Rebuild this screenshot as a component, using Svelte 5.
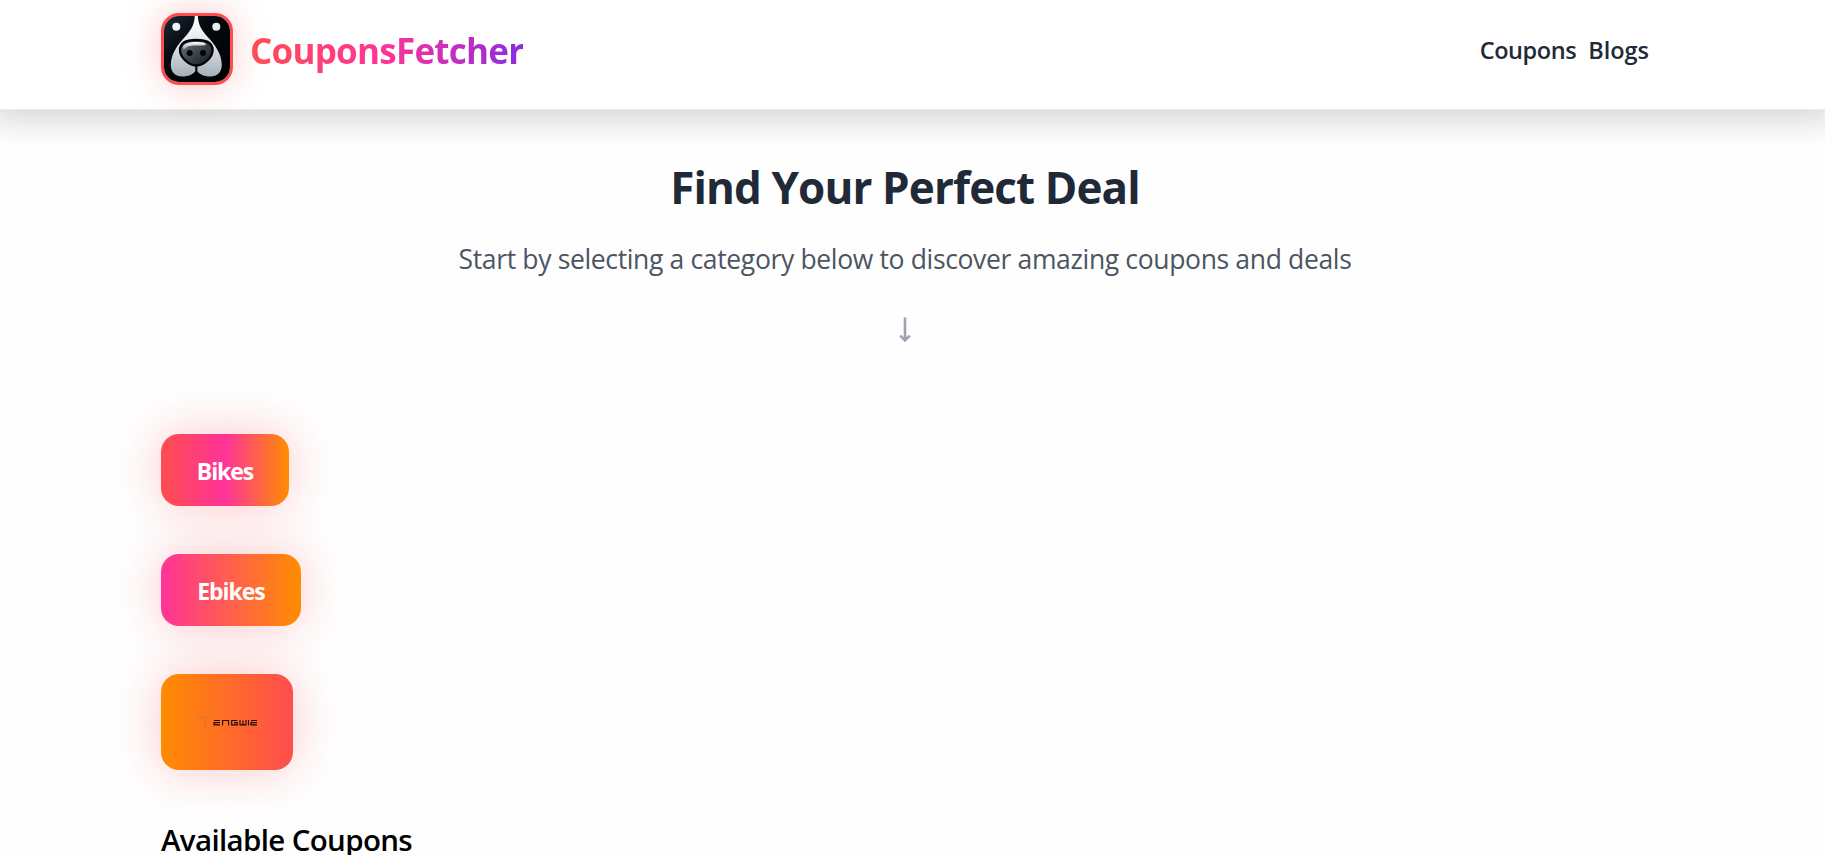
<script>
  const categories = [
    { name: 'Bikes', kind: 'bikes' },
    { name: 'Ebikes', kind: 'ebikes' },
    { name: 'Engwe', kind: 'engwe' }
  ];
</script>

<header>
  <div class="inner">
    <a class="brand" href="#home">
      <span class="logo">
        <svg viewBox="0.6 0 66 66" width="66" height="66" aria-hidden="true">
          <defs>
            <linearGradient id="night" x1="0" y1="0" x2="1" y2="1">
              <stop offset="0" stop-color="#1b2b38" />
              <stop offset=".35" stop-color="#050a10" />
              <stop offset="1" stop-color="#000" />
            </linearGradient>
            <linearGradient id="fur" x1="0" y1="0" x2="0" y2="1">
              <stop offset="0" stop-color="#fff" />
              <stop offset=".45" stop-color="#e3e6e9" />
              <stop offset="1" stop-color="#a3b0b8" />
            </linearGradient>
            <linearGradient id="nose" x1="0" y1="0" x2="1" y2="1">
              <stop offset="0" stop-color="#717b84" />
              <stop offset=".5" stop-color="#3c444c" />
              <stop offset="1" stop-color="#14181d" />
            </linearGradient>
            <linearGradient id="shine" x1="0" y1="0" x2="0" y2="1">
              <stop offset="0" stop-color="#fff" />
              <stop offset="1" stop-color="#8d969e" />
            </linearGradient>
          </defs>
          <rect width="68" height="66" fill="url(#night)" />
          <path d="M31.400 0h3c.4 8 3 13 9 20 9 9 15 19 15 29 0 7-4.500 11.500-11.500 11.500-6 0-11-2-14-6.500-3 4.500-8 6.500-14 6.500-7 0-11.500-4.500-11.500-11.500 0-10 6-20 15-29 6-7 8.600-12 9-20z" fill="url(#fur)" />
          <path d="M32.900 49v7" stroke="#000" stroke-width="2" />
          <path d="M32.900 24c9.800 0 16.300 3.300 16.300 10.300 0 7-8.700 15.200-16.300 15.200s-16.300-8.200-16.300-15.200c0-7 6.500-10.300 16.300-10.300z" fill="url(#nose)" stroke="#000308" stroke-width="2.300" />
          <path d="M19.500 31c1-3.500 6-5 13.400-5 6 0 9.500.8 9.500 2.300 0 1.400-4 1.200-10 1.200-6 0-9 1-11 3.500-.8 1-2.200.2-1.900-2z" fill="url(#shine)" />
          <circle cx="26.300" cy="37" r="3" fill="#020408" />
          <circle cx="39.600" cy="37" r="3" fill="#020408" />
          <circle cx="12.900" cy="10.800" r="4" fill="#f1f3f4" />
          <circle cx="52.900" cy="10.800" r="4" fill="#e9ecee" />
        </svg>
      </span>
      <span class="wordmark">CouponsFetcher</span>
    </a>
    <nav>
      <a class="coupons" href="#coupons">Coupons</a>
      <a class="blogs" href="#blogs">Blogs</a>
    </nav>
  </div>
</header>

<main>
  <section class="intro">
    <h1>Find Your Perfect Deal</h1>
    <p>Start by selecting a category below to discover amazing coupons and deals</p>
    <svg class="arrow" viewBox="0 0 13 26" width="13" height="26" aria-hidden="true">
      <path d="M6 0.500v22.500M1.200 18.700L6 23.500l4.800-4.800" />
    </svg>
  </section>

  <div class="categories">
    {#each categories as { name, kind }}
      <button class={kind}>
        {#if kind === 'engwe'}
          <svg viewBox="0 0 60 24" width="60" height="24" aria-hidden="true">
            <path d="M0 4l6 1.200 2 1.300 2-1.300 6-1.200-3 3-3.300 1-1 8-.7 1-.7-1-1-8-3.300-1z" fill="#d9752b" opacity=".6" />
            <g fill="none" stroke="#1c0b08" stroke-width="1.100">
              <path d="M23 9.500h-6M23 11.600h-6v2.300h6" />
              <path d="M25.600 14.400v-4.900h6v4.900" />
              <path d="M40.300 9.500h-5.600v4.400h5.600v-2.300h-3.300" />
              <path d="M43 9v4.900h6V9M46 9.500v4.400M51.500 9v5.400" />
              <path d="M60 9.500h-6M60 11.600h-6v2.300h6" />
            </g>
          </svg>
        {:else}
          {name}
        {/if}
      </button>
    {/each}
  </div>

  <h2>Available Coupons</h2>
</main>

<style>
  :global(body) {
    margin: 0;
    background: #fefefe;
    overflow: hidden;
    font-family: "Open Sans", "Noto Sans", sans-serif;
  }

  header {
    position: relative;
    box-sizing: border-box;
    height: 110px;
    padding: 13px 176px 0 161px;
    background: #fff;
    border-bottom: 1px solid #ebebeb;
    box-shadow: 0 0 30px 10px rgba(0, 0, 0, 0.16);
  }

  .inner {
    display: flex;
    align-items: center;
    justify-content: space-between;
    height: 72px;
  }

  a {
    color: inherit;
    text-decoration: none;
  }

  .brand {
    display: flex;
    align-items: center;
    gap: 17px;
  }

  .logo {
    box-sizing: border-box;
    width: 72px;
    height: 72px;
    border: 3px solid #ff4d4f;
    border-radius: 18px;
    overflow: hidden;
    box-shadow: 0 0 36px rgba(255, 77, 79, 0.3);
  }

  .logo svg {
    display: block;
  }

  .wordmark {
    padding-top: 4px;
    font-size: 35px;
    font-weight: 700;
    line-height: 48px;
    letter-spacing: -0.75px;
    color: transparent;
    background: linear-gradient(90deg, #ff4d4f, #ff3399 50%, #8a2be2);
    background-clip: text;
    -webkit-background-clip: text;
  }

  nav {
    display: flex;
    gap: 12px;
    padding-top: 2px;
    color: #1f2937;
    font-size: 23.5px;
    font-weight: 600;
    line-height: 36px;
  }

  .coupons {
    letter-spacing: -0.45px;
  }

  main {
    padding: 50px 176px 0 161px;
  }

  .intro {
    display: flex;
    flex-direction: column;
    align-items: center;
  }

  h1 {
    margin: 0;
    color: #1f2937;
    font-size: 44px;
    font-weight: 700;
    line-height: 54px;
    letter-spacing: -0.89px;
  }

  p {
    margin: 25px 0 0;
    color: #4b5563;
    font-size: 26.5px;
    line-height: 40px;
    letter-spacing: -0.35px;
  }

  .arrow {
    margin-top: 38px;
    fill: none;
    stroke: #9ca3af;
    stroke-width: 2.6;
  }

  .categories {
    display: flex;
    flex-direction: column;
    align-items: flex-start;
    gap: 48px;
    margin-top: 91px;
  }

  button {
    display: flex;
    align-items: center;
    justify-content: center;
    height: 72px;
    padding: 1px 0 0;
    border: 0;
    border-radius: 18px;
    color: #fff;
    font: 700 23px/36px "Open Sans", "Noto Sans", sans-serif;
    letter-spacing: -1.05px;
    box-shadow: 0 0 48px rgba(255, 77, 79, 0.3);
  }

  .bikes {
    width: 128px;
    background: linear-gradient(90deg, #ff4d4f, #ff3399, #ff8c00);
  }

  .ebikes {
    width: 140px;
    background: linear-gradient(90deg, #ff3399, #ff8c00);
  }

  .engwe {
    width: 132px;
    height: 96px;
    background: linear-gradient(90deg, #ff8c00, #ff4d4f);
  }

  h2 {
    margin: 50px 0 0;
    color: #000;
    font-size: 29.5px;
    font-weight: 600;
    line-height: 40px;
    letter-spacing: -0.65px;
  }
</style>
